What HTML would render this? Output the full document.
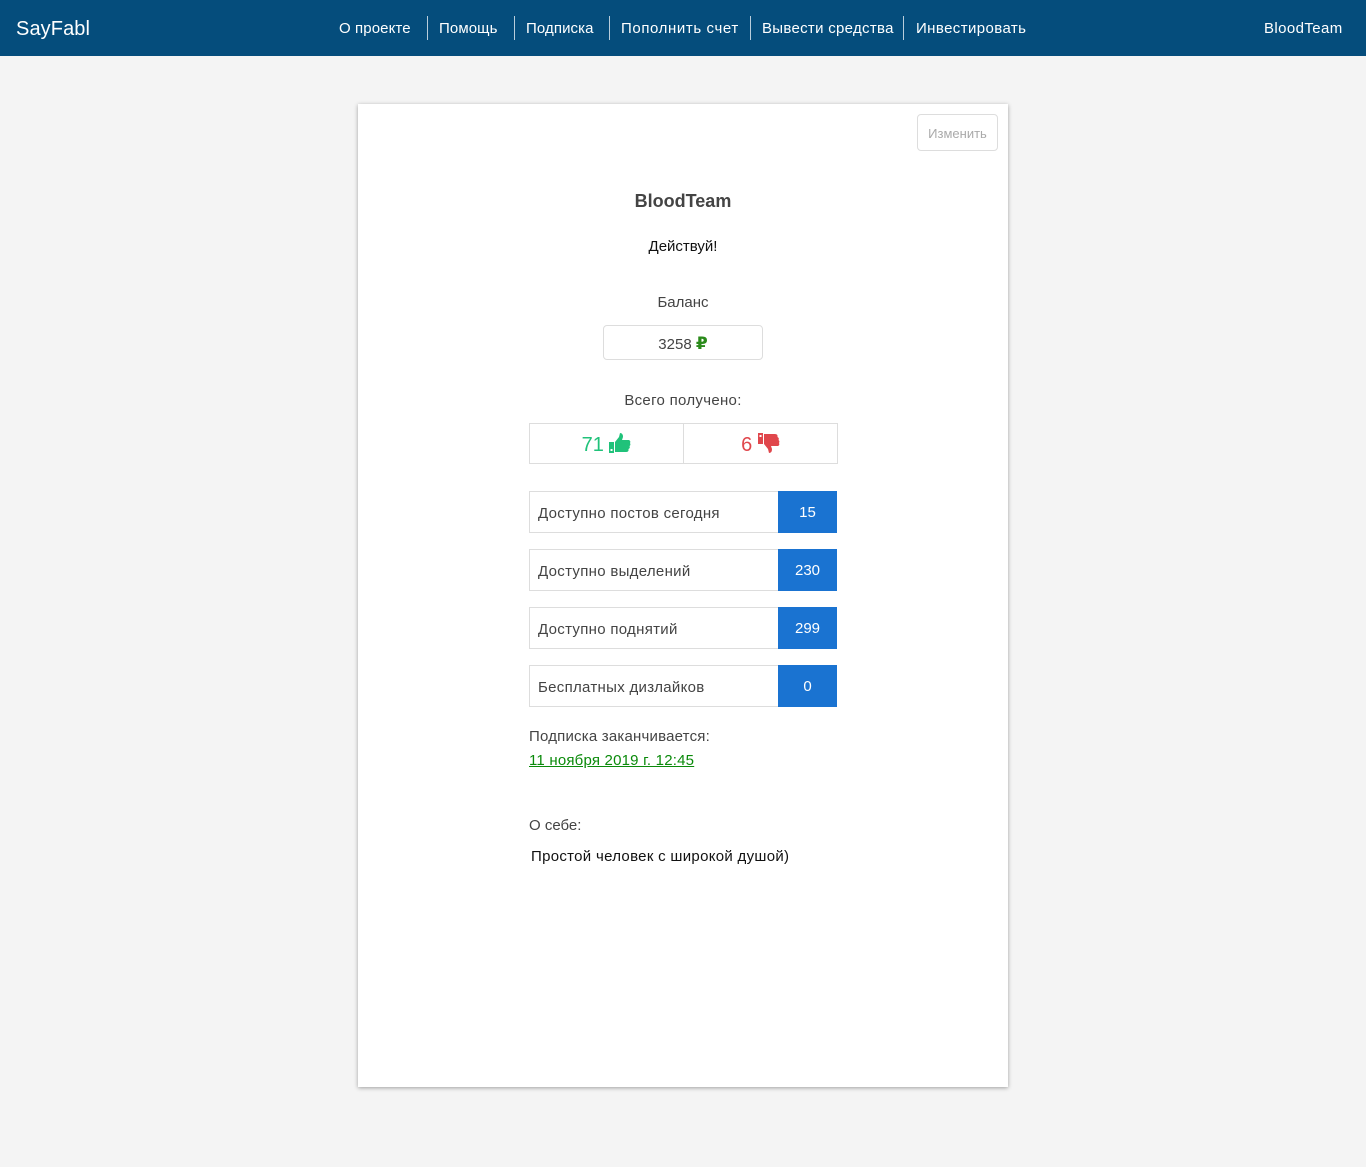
<!DOCTYPE html>
<html><head><meta charset="utf-8"><style>
*{margin:0;padding:0;box-sizing:border-box}
body{width:1366px;height:1167px;background:#f4f4f4;font-family:"Liberation Sans","DejaVu Sans",sans-serif;position:relative;overflow:hidden;color:#333}
.nav{position:absolute;left:0;top:0;width:1366px;height:56px;background:#054d7c;color:#fff}
.nav span{position:absolute;top:20px;font-size:15px;white-space:nowrap;letter-spacing:0.1px}
.sep{position:absolute;top:16px;width:1px;height:24px;background:#b9cddb}
.card{position:absolute;left:358px;top:104px;width:650px;height:983px;background:#fff;box-shadow:0 1px 4px rgba(0,0,0,.35)}
.a{position:absolute;white-space:nowrap}
.c{position:absolute;left:0;width:650px;text-align:center}
.row{position:absolute;left:171px;width:308px;height:42px;border:1px solid #ddd;background:#fff}
.row .t{position:absolute;left:8px;top:13px;font-size:15px;color:#444;letter-spacing:0.3px}
.row .n{position:absolute;right:-1px;top:-1px;width:59px;height:42px;background:#1a73d1;color:#fff;font-size:15px;text-align:center;line-height:44px}
</style></head><body>
<div class="nav">
<span style="left:16px;top:18px;font-size:20px">SayFabl</span>
<span style="left:339px">О проекте</span><div class="sep" style="left:427px"></div>
<span style="left:439px">Помощь</span><div class="sep" style="left:514px"></div>
<span style="left:526px">Подписка</span><div class="sep" style="left:609px"></div>
<span style="left:621px;letter-spacing:0.6px">Пополнить счет</span><div class="sep" style="left:750px"></div>
<span style="left:762px;letter-spacing:0.3px">Вывести средства</span><div class="sep" style="left:903px"></div>
<span style="left:916px;letter-spacing:0.4px">Инвестировать</span>
<span style="left:1264px;letter-spacing:0.4px">BloodTeam</span>
</div>
<div class="card">
<div class="a" style="left:559px;top:10px;width:81px;height:37px;border:1px solid #ddd;border-radius:4px;color:#aaa;font-size:13px;text-align:center;line-height:37px">Изменить</div>
<div class="c" style="top:87px;font-size:18px;font-weight:bold;color:#444">BloodTeam</div>
<div class="c" style="top:134px;font-size:15px;color:#111">Действуй!</div>
<div class="c" style="top:190px;font-size:15px;color:#444">Баланс</div>
<div class="a" style="left:245px;top:221px;width:160px;height:35px;border:1px solid #ddd;border-radius:4px;text-align:center;line-height:35px;font-size:15px;color:#444">3258 <b style="color:#2a8a1a;font-size:17px">₽</b></div>
<div class="c" style="top:288px;font-size:15px;color:#444;letter-spacing:0.3px">Всего получено:</div>
<div class="a" style="left:171px;top:319px;width:309px;height:41px;border:1px solid #ddd">
 <div class="a" style="left:153px;top:0;width:1px;height:39px;background:#ddd"></div>
 <div class="a" style="left:0;top:9px;width:153px;text-align:center;font-size:20px;color:#20c27a">71 <svg width="22" height="20" viewBox="0 0 22 20" style="vertical-align:-2px"><rect x="0" y="9" width="5" height="11" fill="#20c27a"/><rect x="1.5" y="16" width="2" height="2" fill="#fff"/><path d="M6 9 L10 4 L11 0 Q14 0 14 4 L13 7 L20 7 Q22 8 21 10 Q22 12 20.5 13 Q21.5 15 19.5 16 Q20 19 17 19 L6 19Z" fill="#20c27a"/></svg></div>
 <div class="a" style="left:154px;top:9px;width:153px;text-align:center;font-size:20px;color:#e0474c">6 <svg width="22" height="20" viewBox="0 0 22 20" style="vertical-align:-2px;transform:scaleY(-1)"><rect x="0" y="9" width="5" height="11" fill="#e0474c"/><rect x="1.5" y="16" width="2" height="2" fill="#fff"/><path d="M6 9 L10 4 L11 0 Q14 0 14 4 L13 7 L20 7 Q22 8 21 10 Q22 12 20.5 13 Q21.5 15 19.5 16 Q20 19 17 19 L6 19Z" fill="#e0474c"/></svg></div>
</div>
<div class="row" style="top:387px"><span class="t">Доступно постов сегодня</span><span class="n">15</span></div>
<div class="row" style="top:445px"><span class="t">Доступно выделений</span><span class="n">230</span></div>
<div class="row" style="top:503px"><span class="t">Доступно поднятий</span><span class="n">299</span></div>
<div class="row" style="top:561px"><span class="t">Бесплатных дизлайков</span><span class="n">0</span></div>
<div class="a" style="left:171px;top:624px;font-size:15px;color:#444;letter-spacing:0.2px">Подписка заканчивается:</div>
<div class="a" style="left:171px;top:648px;font-size:15px;color:#0a8a0a;text-decoration:underline;letter-spacing:0.2px">11 ноября 2019 г. 12:45</div>
<div class="a" style="left:171px;top:713px;font-size:15px;color:#444">О себе:</div>
<div class="a" style="left:173px;top:744px;font-size:15px;color:#111;letter-spacing:0.3px">Простой человек с широкой душой)</div>
</div>
</body></html>
